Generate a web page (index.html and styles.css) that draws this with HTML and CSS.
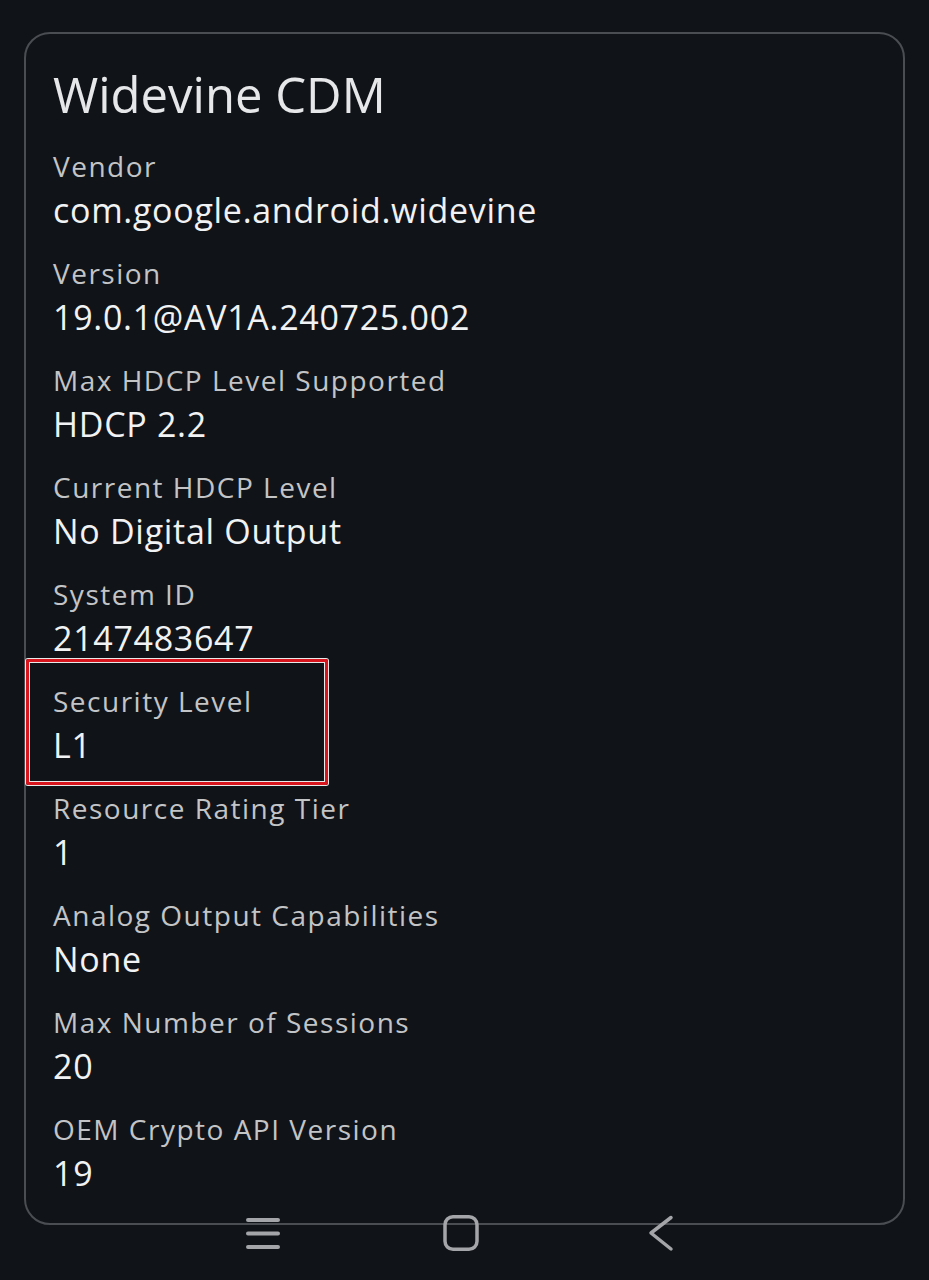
FILE: index.html
```html
<!DOCTYPE html>
<html lang="en">
<head>
    <meta charset="utf-8">
    <meta name="viewport" content="width=device-width, initial-scale=1.0">
    <title>Widevine CDM</title>
    <link rel="stylesheet" href="styles.css">
</head>
<body>

<div class="card">
    <h1 class="title">Widevine CDM</h1>
    <div class="item">
        <div class="label">Vendor</div>
        <div class="value">com.google.android.widevine</div>
    </div>
    <div class="item">
        <div class="label">Version</div>
        <div class="value">19.0.1@AV1A.240725.002</div>
    </div>
    <div class="item">
        <div class="label">Max HDCP Level Supported</div>
        <div class="value">HDCP 2.2</div>
    </div>
    <div class="item">
        <div class="label">Current HDCP Level</div>
        <div class="value">No Digital Output</div>
    </div>
    <div class="item">
        <div class="label">System ID</div>
        <div class="value">2147483647</div>
    </div>
    <div class="item flagged">
        <div class="label">Security Level</div>
        <div class="value">L1</div>
    </div>
    <div class="item">
        <div class="label">Resource Rating Tier</div>
        <div class="value">1</div>
    </div>
    <div class="item">
        <div class="label">Analog Output Capabilities</div>
        <div class="value">None</div>
    </div>
    <div class="item">
        <div class="label">Max Number of Sessions</div>
        <div class="value">20</div>
    </div>
    <div class="item">
        <div class="label">OEM Crypto API Version</div>
        <div class="value">19</div>
    </div>
</div>

<div class="navbar">
    <svg class="nav-icon nav-menu" width="36" height="38" viewBox="0 0 36 38">
        <path d="M3 6H33M3 19.5H33M3 33H33" stroke="#a3a5a8" stroke-width="4" stroke-linecap="round" fill="none"/>
    </svg>
    <svg class="nav-icon nav-home" width="36" height="38" viewBox="0 0 36 38">
        <rect x="2" y="2.75" width="32" height="32.5" rx="8" stroke="#a3a5a8" stroke-width="3.5" fill="none"/>
    </svg>
    <svg class="nav-icon nav-back" width="26" height="38" viewBox="0 0 26 38">
        <path d="M23 3.5L3 19L23 35" stroke="#a3a5a8" stroke-width="3.5" stroke-linecap="round" stroke-linejoin="round" fill="none"/>
    </svg>
</div>

</body>
</html>
```

FILE: styles.css
```css
body {
    font-family: 'Open Sans', 'Noto Sans', sans-serif;
    background-color: #101318;
    margin: 0;
    height: 1280px;
    overflow: hidden;
    position: relative;
}
.card {
    box-sizing: border-box;
    margin: 32px 24px 0;
    height: 1193px;
    border: 2px solid #4a4d52;
    border-radius: 26px;
    padding: 32px 27px 0;
}
.title {
    margin: 0 0 26px;
    font-size: 49px;
    line-height: 56px;
    font-weight: 400;
    color: #e6e7e9;
}
.item {
    position: relative;
    margin-bottom: 23px;
}
.label {
    font-size: 28px;
    line-height: 36px;
    letter-spacing: 1.5px;
    color: #c3c4c6;
}
.value {
    margin-top: 4px;
    font-size: 34px;
    line-height: 44px;
    letter-spacing: 0.7px;
    color: #f1f2f3;
}
.flagged::after {
    content: "";
    position: absolute;
    top: -24px;
    bottom: -18px;
    left: -27px;
    width: 302px;
    box-sizing: border-box;
    border: 3px solid #d8141d;
    box-shadow: 0 0 0 1px #e9e9e9, inset 0 0 0 1px #e9e9e9;
    border-radius: 2px;
}
.navbar {
    position: absolute;
    left: 0;
    right: 0;
    top: 1214px;
    display: flex;
    align-items: flex-start;
    padding-left: 245px;
    height: 38px;
}
.nav-icon {
    display: block;
}
.nav-home {
    margin-left: 162px;
}
.nav-back {
    margin-left: 169px;
}
```
